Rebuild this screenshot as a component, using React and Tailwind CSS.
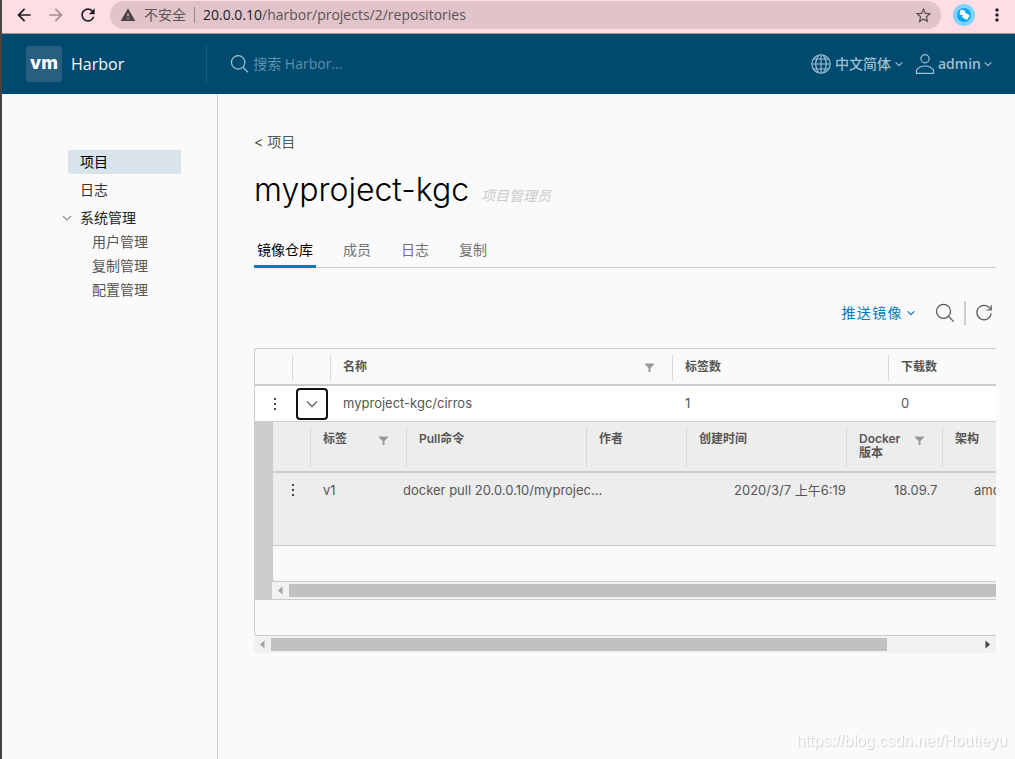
import React from 'react';
import { MdArrowBack, MdArrowForward, MdRefresh, MdWarning, MdStarBorder, MdMoreVert } from 'react-icons/md';

const Caret = ({ className = '' }) => (
  <svg className={className} viewBox="0 0 12 12" fill="none" stroke="currentColor" strokeWidth="1.6">
    <path d="M1 3.5 6 8.500l5-5" />
  </svg>
);

const SearchIcon = ({ className = '' }) => (
  <svg className={className} viewBox="0 0 20 20" fill="none" stroke="currentColor" strokeWidth="1.3">
    <circle cx="8.5" cy="8.3" r="7" />
    <path d="m13.6 13.4 5 5.2" />
  </svg>
);

const GlobeIcon = () => (
  <svg className="h-5 w-5" viewBox="0 0 20 20" fill="none" stroke="currentColor" strokeWidth="1.1">
    <circle cx="10" cy="10" r="9.2" />
    <path d="M10 .8v18.4M.8 10h18.4M2.6 5h14.8M2.6 15h14.8" />
    <path d="M8 1C3.6 6.5 3.6 13.5 8 19M12 1c4.4 5.5 4.4 12.5 0 18" />
  </svg>
);

const UserIcon = () => (
  <svg className="h-5 w-5" viewBox="0 0 20 20" fill="none" stroke="currentColor" strokeWidth="1.2">
    <circle cx="10" cy="4.8" r="4.1" />
    <path d="M1.5 19.3v-3.2c1.700-2.500 4.700-4.100 8.500-4.100s6.800 1.600 8.500 4.100v3.200z" />
  </svg>
);

const RefreshIcon = () => (
  <svg className="h-[18px] w-[18px]" viewBox="0 0 18 18" fill="none" stroke="currentColor" strokeWidth="1.2">
    <path d="M15.6 5.6A7.2 7.2 0 1 0 16.2 9.5" />
    <path d="M16.2 1.2v4.800h-4.800" />
  </svg>
);

const FilterButton = ({ label }) => (
  <button type="button" aria-label={label} className="mt-1 text-[#9a9a9a]">
    <svg className="h-[9px] w-[9px]" viewBox="0 0 9 9" fill="currentColor">
      <path d="M0 .5h9v1L5.5 5v4h-2V5L0 1.5z" />
    </svg>
  </button>
);

const Kebab = () => (
  <button type="button" aria-label="操作" className="mx-auto block pl-px text-[#454545]">
    <svg className="h-4 w-4" viewBox="0 0 16 16" fill="currentColor">
      <rect x="7" y="2" width="2" height="2" />
      <rect x="7" y="7" width="2" height="2" />
      <rect x="7" y="12" width="2" height="2" />
    </svg>
  </button>
);

const BrowserBar = () => (
  <div className="flex h-[34px] items-start border-b border-[#a5929a] bg-[#ffdde4] pr-2 pl-3 text-[#202124]">
    <div className="flex h-[30px] items-center gap-3">
      <button type="button" aria-label="Back"><MdArrowBack size={20} /></button>
      <button type="button" aria-label="Forward" className="text-[#a08c91]"><MdArrowForward size={20} /></button>
      <button type="button" aria-label="Reload"><MdRefresh size={20} /></button>
    </div>
    <div className="mt-px ml-3 flex h-7 flex-1 items-center rounded-full bg-[#e0c4c9] pr-2 pl-[10px] text-[#5f5357]">
      <MdWarning size={16} className="text-[#4f4548]" />
      <span className="ml-2 text-sm">不安全</span>
      <span className="mx-2 h-4 w-px bg-[#98868a]" />
      <span className="flex-1 font-['Open_Sans','Noto_Sans_CJK_SC',sans-serif] text-sm">
        <span className="text-[#202124]">20.0.0.10</span>/harbor/projects/2/repositories
      </span>
      <button type="button" aria-label="Bookmark"><MdStarBorder size={19} /></button>
    </div>
    <div className="ml-3 flex h-[30px] items-center gap-3">
      <svg className="h-[22px] w-[22px]" viewBox="0 0 22 22">
        <circle cx="11" cy="11" r="11" fill="#7fd4fb" />
        <circle cx="11" cy="11" r="7" fill="#0aa5f2" />
        <rect x="7" y="6" width="5" height="5" rx=".8" transform="rotate(12 9 8)" fill="#fff" />
        <rect x="10" y="9.500" width="6" height="5.500" rx=".8" transform="rotate(30 13 12)" fill="#fff" />
      </svg>
      <button type="button" aria-label="Menu"><MdMoreVert size={20} /></button>
    </div>
  </div>
);

const Header = () => (
  <header className="flex h-[60px] items-center bg-[#004a70] pr-[23px] pl-6 font-['Open_Sans','Noto_Sans_CJK_SC',sans-serif] text-[#9fc0d0]">
    <a href="#" className="flex w-[180px] items-center gap-[9px] text-[#fafafa]">
      <span className="flex h-9 w-9 items-center justify-center rounded-[3px] bg-[#265f80] pb-[2px] font-['Inter',sans-serif] text-lg leading-none font-extrabold text-white">vm</span>
      <span className="text-base">Harbor</span>
    </a>
    <div className="flex h-10 flex-1 items-center gap-1 border-l border-[#1b5d7f] pl-[23px]">
      <SearchIcon className="h-5 w-5" />
      <input
        type="search"
        aria-label="搜索 Harbor"
        placeholder="搜索 Harbor..."
        className="w-full bg-transparent text-sm outline-none placeholder:text-[#5f92ab]"
      />
    </div>
    <button type="button" className="flex items-center gap-1 text-sm font-semibold">
      <GlobeIcon />
      <span className="font-medium">中文简体</span>
      <Caret className="h-2 w-2" />
    </button>
    <button type="button" className="ml-3 flex items-center gap-[3px] text-sm font-semibold">
      <UserIcon />
      admin
      <Caret className="h-2 w-2" />
    </button>
  </header>
);

const Sidebar = () => {
  const children = ['用户管理', '复制管理', '配置管理'];

  return (
    <nav className="w-[216px] shrink-0 border-r border-[#ccc] pt-14 pr-9 text-sm leading-6">
      <a href="#" className="ml-[66px] block rounded-l-[3px] bg-[#d9e4ea] pl-3 text-black">项目</a>
      <a href="#" className="mt-1 ml-[66px] block pl-3 text-[#333]">日志</a>
      <button type="button" className="mt-1 ml-[60px] flex items-center gap-2 text-[#222]">
        <Caret className="h-[10px] w-[10px] text-[#999]" />
        系统管理
      </button>
      <ul className="ml-[90px]">
        {children.map((name) => (
          <li key={name}><a href="#" className="text-[#565656]">{name}</a></li>
        ))}
      </ul>
    </nav>
  );
};

const Tabs = () => {
  const tabs = ['镜像仓库', '成员', '日志', '复制'];

  return (
    <div role="tablist" className="mt-[22px] flex gap-6 text-sm shadow-[inset_0_-1px_0_#ccc]">
      {tabs.map((tab, i) => (
        <button
          key={tab}
          type="button"
          role="tab"
          aria-selected={i === 0}
          className={`h-9 border-b-3 px-[3px] pt-[2px] ${i === 0 ? 'border-[#007cbb] text-black' : 'border-transparent text-[#737373]'}`}
        >
          {tab}
        </button>
      ))}
    </div>
  );
};

const Arrow = ({ right }) => (
  <svg className="h-[17px] w-[17px] shrink-0" viewBox="0 0 17 17">
    {right ? <path d="M6.500 4.500v8l4.500-4z" fill="#454545" /> : <path d="M10.500 4.500v8L6 8.500z" fill="#a3a3a3" />}
  </svg>
);

const ColumnHead = ({ children, filter, tall }) => (
  <th className="py-[5px] text-left font-semibold">
    <div className={`flex justify-between border-r border-[#d8d8d8] pr-[18px] pl-3 ${tall ? 'h-10 pt-[5px]' : 'h-[26px] pt-1'}`}>
      <span>{children}</span>
      {filter && <span><FilterButton label={`筛选 ${filter}`} /></span>}
    </div>
  </th>
);

const TagTable = () => (
  <div className="bg-[#ccc] pl-[17px]">
    <table className="block border-l border-[#ccc] bg-[#ededed]">
      <thead className="block text-xs leading-[14px]">
        <tr className="grid h-[51px] grid-cols-[38px_96px_180px_100px_160px_96px_1fr] border-b-2 border-[#ccc]">
          <ColumnHead tall />
          <ColumnHead tall filter="标签">标签</ColumnHead>
          <ColumnHead tall>Pull命令</ColumnHead>
          <ColumnHead tall>作者</ColumnHead>
          <ColumnHead tall>创建时间</ColumnHead>
          <ColumnHead tall filter="Docker版本">Docker<br />版本</ColumnHead>
          <ColumnHead tall>架构</ColumnHead>
        </tr>
      </thead>
      <tbody className="block text-[13px] leading-4">
        <tr className="grid h-[73px] grid-cols-[38px_80px_230px_101px_160px_80px_1fr] border-b border-[#ccc] pt-[9px]">
          <td><Kebab /></td>
          <td className="pl-3"><a href="#" className="text-[#565656]">v1</a></td>
          <td className="truncate pl-3">docker pull 20.0.0.10/myprojec...</td>
          <td />
          <td className="pl-3">2020/3/7 上午6:19</td>
          <td className="pl-3">18.09.7</td>
          <td className="pl-3">amd64</td>
        </tr>
      </tbody>
    </table>
    <div className="h-9 rounded-bl-[3px] border-b border-l border-[#ccc] bg-[#fafafa]" />
    <div className="flex h-[17px] items-center bg-[#f1f1f1]">
      <Arrow />
      <div className="h-[13px] flex-1 bg-[#c1c1c1]" />
    </div>
  </div>
);

const RepositoryTable = () => (
  <div className="mt-[18px]">
    <div className="overflow-hidden rounded-tl-[3px] rounded-bl-[3px] border-y border-l border-[#ccc]">
      <table className="w-[115%] table-fixed border-collapse">
        <colgroup>
          <col className="w-[38px]" />
          <col className="w-[38px]" />
          <col className="w-[342px]" />
          <col className="w-[216px]" />
          <col />
        </colgroup>
        <thead className="text-xs leading-4">
          <tr className="h-[37px] shadow-[inset_0_-2px_0_#ccc]">
            <ColumnHead />
            <ColumnHead />
            <ColumnHead filter="名称">名称</ColumnHead>
            <ColumnHead>标签数</ColumnHead>
            <ColumnHead>下载数</ColumnHead>
          </tr>
        </thead>
        <tbody className="text-[13px] leading-4">
          <tr className="h-9 bg-white shadow-[inset_0_-1px_0_#ccc]">
            <td><Kebab /></td>
            <td>
              <button
                type="button"
                aria-label="收起"
                aria-expanded="true"
                className="ml-[3px] flex h-8 w-8 items-center justify-center rounded-[4px] border-2 border-[#101010] text-[#737373]"
              >
                <Caret className="h-3 w-3" />
              </button>
            </td>
            <td className="pb-[3px] pl-3"><a href="#" className="text-[#565656]">myproject-kgc/cirros</a></td>
            <td className="pb-[3px] pl-3">1</td>
            <td className="pb-[3px] pl-3">0</td>
          </tr>
          <tr>
            <td colSpan={5} className="p-0"><TagTable /></td>
          </tr>
        </tbody>
      </table>
      <div className="h-9 border-t border-[#ccc]" />
    </div>
    <div className="flex h-[17px] items-center bg-[#f1f1f1]">
      <Arrow />
      <div className="flex-1">
        <div className="h-[13px] w-[87%] bg-[#c1c1c1]" />
      </div>
      <Arrow right />
    </div>
  </div>
);

const App = () => (
  <div className="flex min-h-screen flex-col border-l-2 border-[#444] bg-[#fafafa] font-['Inter','Noto_Sans_CJK_SC',sans-serif] text-[#565656]">
    <BrowserBar />
    <Header />
    <div className="flex flex-1">
      <Sidebar />
      <main className="min-w-0 flex-1 pt-9 pr-[19px] pl-9">
        <a href="#" className="block text-sm leading-6">&lt; 项目</a>
        <div className="mt-4 flex items-baseline gap-3">
          <h1 className="text-[32px] leading-10 font-light text-black">myproject-kgc</h1>
          <span className="text-sm text-[#ccc] italic">项目管理员</span>
        </div>
        <Tabs />
        <div className="mt-7 flex h-[34px] items-center justify-end pr-[3px]">
          <button type="button" className="flex items-center gap-1 text-sm tracking-widest text-[#0079b8]">
            推送镜像
            <Caret className="h-2 w-2" />
          </button>
          <button type="button" aria-label="搜索" className="ml-5"><SearchIcon className="h-5 w-5" /></button>
          <span className="mx-[9px] h-6 w-[2px] bg-[#ccc]" />
          <button type="button" aria-label="刷新"><RefreshIcon /></button>
        </div>
        <RepositoryTable />
      </main>
    </div>
    <div className="pointer-events-none fixed right-2 bottom-2 font-['Liberation_Sans',sans-serif] text-base leading-5 text-white [text-shadow:1px_1px_1px_#ccc]">
      https://blog.csdn.net/Houtieyu
    </div>
  </div>
);

export default App;
